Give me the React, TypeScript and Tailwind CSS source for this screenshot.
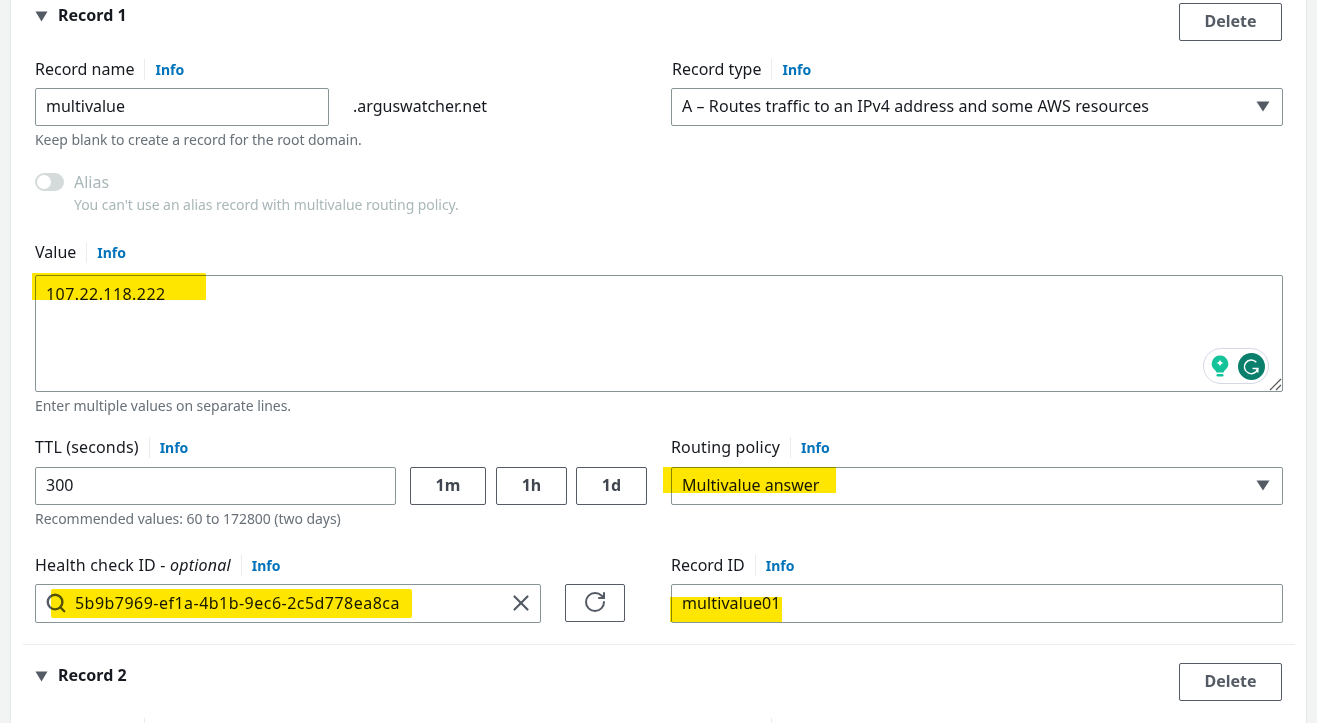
import React from "react";
import { RotateCw, X, Search } from "lucide-react";

const Caret = () => (
  <svg width="14" height="11" viewBox="0 0 14 11" className="shrink-0">
    <path d="M0.5 0.5 H13.5 L7 10.5 Z" fill="#545b64" />
  </svg>
);

const Label = ({ children, info = true }: { children: React.ReactNode; info?: boolean }) => (
  <div className="flex items-center h-[22px] text-[16px] leading-[22px] text-[#16191f]">
    <span>{children}</span>
    {info && (
      <>
        <span className="w-px h-[21px] bg-[#eaeded] ml-[10px] mr-[10px]" />
        <span className="text-[14px] font-bold text-[#0073bb] pt-[1px]">Info</span>
      </>
    )}
  </div>
);

const Hint = ({ children, className = "" }: { children: React.ReactNode; className?: string }) => (
  <div className={`text-[14px] leading-[20px] tracking-[-0.05px] text-[#687078] ${className}`}>{children}</div>
);

const Button = ({ children, className = "" }: { children: React.ReactNode; className?: string }) => (
  <div className={`h-[38px] flex items-center justify-center border border-[#545b64] rounded-[2px] bg-white pb-[2px] text-[16px] font-bold text-[#545b64] shrink-0 ${className}`}>
    {children}
  </div>
);

const Box = ({ children, className = "" }: { children?: React.ReactNode; className?: string }) => (
  <div className={`h-[38px] flex items-center border border-[#879596] rounded-[2px] bg-white px-[10px] pb-[2px] text-[16px] text-[#16191f] ${className}`}>
    {children}
  </div>
);

const Mark = ({ className }: { className: string }) => (
  <div className={`absolute bg-[#ffe600] mix-blend-multiply ${className}`} />
);

const Header = ({ title }: { title: string }) => (
  <div className="flex justify-between pl-[12px] pr-[13px]">
    <div className="flex items-start gap-[10px] h-[38px] text-[16px] font-bold leading-[24px] text-[#16191f]">
      <span className="mt-[8px]"><svg width="13" height="11" viewBox="0 0 13 11"><path d="M0.5 0.5 H12.500 L6.500 10.500 Z" fill="#545b64" /></svg></span>
      <span>{title}</span>
    </div>
    <Button className="w-[103px]">Delete</Button>
  </div>
);

export default function App() {
  return (
    <div className="h-[723px] overflow-hidden bg-[#f2f3f3] px-[10px] font-['Noto_Sans',sans-serif]">
      <div className="relative h-full bg-white border-x border-[#e4e7e7] pl-[12px] pr-[11px] pt-[3px]">
        <Header title="Record 1" />

        <div className="px-[12px]">
          <div className="grid grid-cols-2 gap-x-[24px] mt-[17px]">
            <div>
              <Label>Record name</Label>
              <div className="flex items-center mt-[8px]">
                <Box className="w-[294px]">multivalue</Box>
                <span className="ml-[24px] pb-[2px] text-[16px] text-[#16191f]">.arguswatcher.net</span>
              </div>
              <Hint className="mt-[4px]">Keep blank to create a record for the root domain.</Hint>
            </div>
            <div>
              <Label><span className="pl-px">Record type</span></Label>
              <Box className="mt-[8px] justify-between pr-[12px]">
                <span className="tracking-[0.08px]">A – Routes traffic to an IPv4 address and some AWS resources</span>
                <Caret />
              </Box>
            </div>
          </div>

          <div className="flex mt-[20px] h-[46px]">
            <div className="mt-[3px] relative w-[29px] h-[18px] rounded-full bg-[#d5dbdb] shrink-0">
              <div className="absolute left-[2px] top-[2px] w-[14px] h-[14px] rounded-full bg-white" />
            </div>
            <div className="ml-[10px]">
              <div className="text-[16px] leading-[24px] text-[#aab7b8]">Alias</div>
              <div className="text-[14px] leading-[20px] tracking-[-0.05px] text-[#aab7b8] mt-[1px]">You can't use an alias record with multivalue routing policy.</div>
            </div>
          </div>

          <div className="mt-[25px]">
            <Label>Value</Label>
            <div className="relative mt-[12px] h-[117px] border border-[#879596] rounded-[2px] px-[10px] py-[6px] text-[16px] leading-[24px] tracking-[0.43px] text-[#16191f]">
              107.22.118.222
              <div className="absolute right-[13px] bottom-[7px] w-[66px] h-[36px] rounded-full border border-[#d5d9e4] bg-white flex items-center justify-between pl-[6px] pr-[3px]">
                <svg width="20" height="24" viewBox="0 0 20 24">
                  <path d="M10 1.500a8.200 8.200 0 0 0-5 14.700c.9.7 1.200 1.300 1.300 2.300h7.400c.1-1 .4-1.600 1.300-2.300A8.200 8.200 0 0 0 10 1.500Z" fill="#15c39a" />
                  <path d="M10 5.500c.6 2.200 1.300 2.900 3.500 3.500-2.200.6-2.900 1.300-3.500 3.500-.6-2.200-1.300-2.900-3.500-3.500 2.200-.6 2.900-1.300 3.500-3.500Z" fill="#fff" />
                  <rect x="6.500" y="20" width="7" height="2.500" rx="1.200" fill="#15c39a" />
                </svg>
                <svg width="27" height="27" viewBox="0 0 27 27">
                  <circle cx="13.500" cy="13.500" r="13.500" fill="#0a7f6c" />
                  <path d="M18.300 9.300a6.800 6.800 0 1 0 1.500 6.200h-5.300" fill="none" stroke="#fff" strokeWidth="1.500" />
                  <path d="M19.800 15.500v4" fill="none" stroke="#fff" strokeWidth="1.500" />
                </svg>
              </div>
              <svg width="13" height="13" viewBox="0 0 13 13" className="absolute right-0 bottom-0">
                <path d="M1 12 L12 1 M7 12 L12 7" stroke="#555" strokeWidth="1.200" />
              </svg>
            </div>
            <Hint className="mt-[4px]">Enter multiple values on separate lines.</Hint>
          </div>

          <div className="grid grid-cols-2 gap-x-[24px] mt-[20px]">
            <div>
              <Label><span className="tracking-[0.15px]">TTL (seconds)</span></Label>
              <div className="flex mt-[9px]">
                <Box className="w-[361px]">300</Box>
                <Button className="w-[76px] ml-[14px] text-[#414750]">1m</Button>
                <Button className="w-[71px] ml-[10px] text-[#414750]">1h</Button>
                <Button className="w-[71px] ml-[9px] text-[#414750]">1d</Button>
              </div>
              <Hint className="mt-[4px]">Recommended values: 60 to 172800 (two days)</Hint>
            </div>
            <div>
              <Label><span className="tracking-[0.15px]">Routing policy</span></Label>
              <Box className="mt-[9px] justify-between pr-[12px]">
                <span>Multivalue answer</span>
                <Caret />
              </Box>
            </div>
          </div>

          <div className="grid grid-cols-2 gap-x-[24px] mt-[25px]">
            <div>
              <Label><span className="tracking-[0.2px]">Health check ID - <em>optional</em></span></Label>
              <div className="flex mt-[8px]">
                <Box className="w-[506px] h-[39px] pr-[6px] pl-[9px]">
                  <Search size={22} strokeWidth={2.6} className="text-[#545b64] shrink-0" />
                  <span className="ml-[8px] flex-1 tracking-[0.47px]">5b9b7969-ef1a-4b1b-9ec6-2c5d778ea8ca</span>
                  <X size={26} strokeWidth={2} className="text-[#545b64] shrink-0" />
                </Box>
                <Button className="w-[60px] ml-[24px]"><RotateCw size={24} strokeWidth={2} /></Button>
              </div>
            </div>
            <div>
              <Label>Record ID</Label>
              <Box className="mt-[8px] h-[39px] tracking-[0.1px]">multivalue01</Box>
            </div>
          </div>
        </div>

        <div className="h-px bg-[#eaeded] mt-[21px]" />
        <div className="mt-[18px]"><Header title="Record 2" /></div>
        <div className="px-[12px] mt-[17px] grid grid-cols-2 gap-x-[24px]">
          <div className="h-[22px] flex">
            <span className="w-[109px]" />
            <span className="w-px h-full bg-[#eaeded]" />
          </div>
          <div className="h-[22px] flex">
            <span className="w-[100px]" />
            <span className="w-px h-full bg-[#eaeded]" />
          </div>
        </div>

        <Mark className="left-[21px] top-[273px] w-[174px] h-[27px] rounded-tr-[2px]" />
        <Mark className="left-[652px] top-[467px] w-[173px] h-[26px]" />
        <Mark className="left-[40px] top-[589px] w-[361px] h-[29px] rounded-[2px]" />
        <Mark className="left-[659px] top-[597px] w-[112px] h-[25px]" />
      </div>
    </div>
  );
}
